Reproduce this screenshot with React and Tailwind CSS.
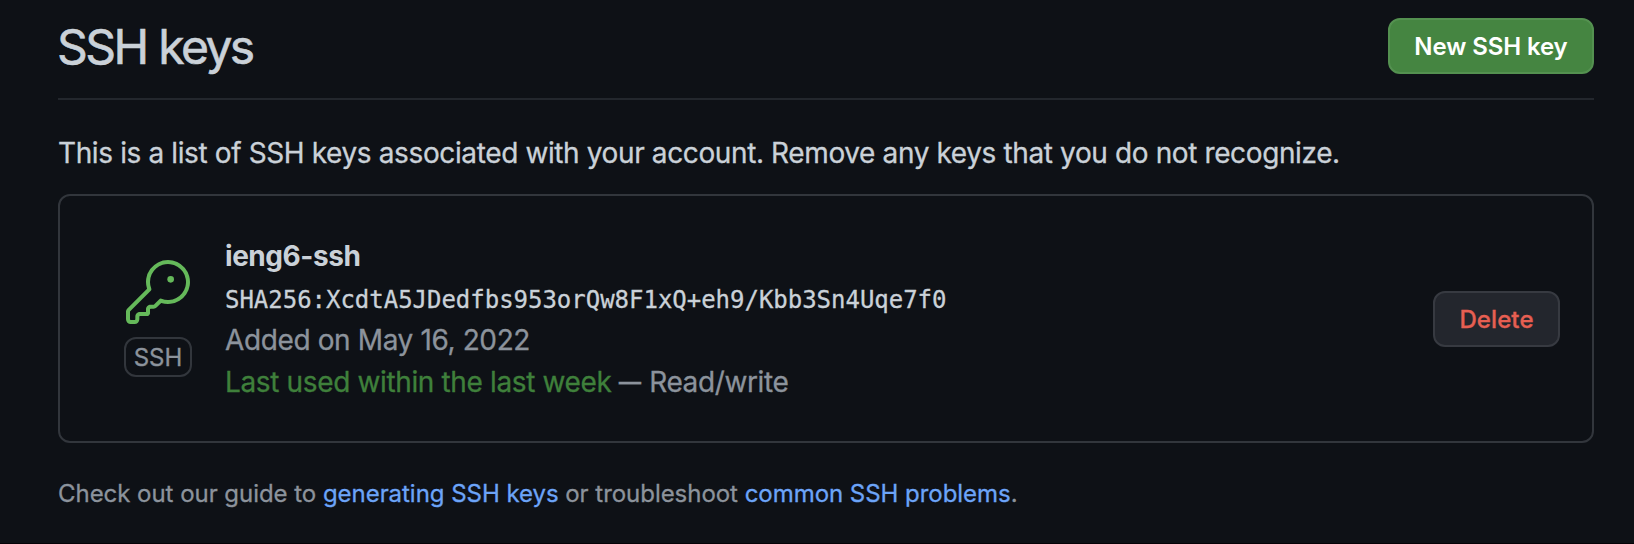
function KeyIcon() {
  return (
    <svg viewBox="0 0 24 24" className="block size-16 fill-[#65b95a]" aria-hidden="true">
      <path d="M16.75 8.5a1.25 1.25 0 1 0 0-2.5 1.25 1.25 0 0 0 0 2.5Z" />
      <path d="M15.75 0a8.25 8.25 0 1 1-2.541 16.101l-1.636 1.636a1.744 1.744 0 0 1-1.237.513H9.25a.25.25 0 0 0-.25.25v1.448a.876.876 0 0 1-.256.619l-.214.213a.75.75 0 0 1-.545.22H5.25a.25.25 0 0 0-.25.25v1A1.75 1.75 0 0 1 3.25 24h-1.5A1.75 1.75 0 0 1 0 22.25v-2.836c0-.464.185-.908.513-1.236l7.386-7.388A8.249 8.249 0 0 1 15.75 0ZM9 8.25a6.733 6.733 0 0 0 .463 2.462.75.75 0 0 1-.168.804l-7.722 7.721a.25.25 0 0 0-.073.177v2.836c0 .138.112.25.25.25h1.5a.25.25 0 0 0 .25-.25v-1c0-.966.784-1.75 1.75-1.75H7.5v-1c0-.966.784-1.75 1.75-1.75h1.086a.25.25 0 0 0 .177-.073l1.971-1.972a.75.75 0 0 1 .804-.168A6.75 6.75 0 1 0 9 8.25Z" />
    </svg>
  );
}

export default function App() {
  return (
    <div className="h-[544px] w-[1634px] overflow-hidden border-b border-[#050206] bg-[#0e1116] pt-[18px] pr-10 pl-[58px] font-['Inter',sans-serif] font-normal whitespace-nowrap text-[#cad1d8] [-webkit-text-stroke:0.3px]">
      <header className="flex h-[82px] items-start justify-between border-b-2 border-[#23272d]">
        <h1 className="-ml-px text-[48px] leading-[58px] font-normal tracking-[-2.6px] [-webkit-text-stroke:0.6px] [word-spacing:1px]">SSH keys</h1>
        <button className="h-14 w-[206px] rounded-xl border-2 border-[#549150] bg-[#458541] pt-px text-center text-2xl leading-[52px] font-semibold tracking-[-0.1px] text-white [-webkit-text-stroke:0px]">
          New SSH key
        </button>
      </header>

      <p className="mt-8 text-[28px] leading-[42px] tracking-[-0.38px]">
        This is a list of SSH keys associated with your account. Remove any keys that you do not recognize.
      </p>

      <section className="mt-5 flex h-[249px] items-center rounded-xl border-2 border-[#32363c] pr-8 pl-16">
        <div className="flex w-[68px] flex-col items-center gap-[13px]">
          <KeyIcon />
          <span className="flex h-10 w-[68px] items-center justify-center rounded-xl border-2 border-[#32363c] pt-px text-2xl text-[#8c939c]">
            SSH
          </span>
        </div>
        <div className="ml-[33px] flex-1 text-[28px] leading-[42px] tracking-[-0.38px] text-[#8c939c]">
          <div className="font-bold tracking-[-0.45px] text-[#cad1d8] [-webkit-text-stroke:0px]">ieng6-ssh</div>
          <div className="h-[42px] pt-0.5 font-['DejaVu_Sans_Mono',monospace] text-2xl leading-[42px] tracking-[-0.02px] text-[#cad1d8]">
            SHA256:XcdtA5JDedfbs953orQw8F1xQ+eh9/Kbb3Sn4Uqe7f0
          </div>
          <div>Added on May 16, 2022</div>
          <div>
            <span className="tracking-[-0.36px] text-[#3f803b]">Last used within the last week</span>{" "}
            <span className="-mr-[2px] -ml-[3px] inline-block scale-x-[0.8]">—</span> Read/write
          </div>
        </div>
        <button className="h-14 w-[127px] rounded-xl border-2 border-[#373a41] bg-[#23262d] pt-px text-center text-2xl leading-[52px] font-medium tracking-[0.1px] text-[#e65f52]">
          Delete
        </button>
      </section>

      <p className="mt-[33px] text-2xl leading-9 tracking-[-0.04px] text-[#8c939c]">
        Check out our guide to <a className="text-[#6ca4f8]">generating SSH keys</a> or troubleshoot{" "}
        <a className="text-[#6ca4f8]">common SSH problems</a>.
      </p>
    </div>
  );
}
